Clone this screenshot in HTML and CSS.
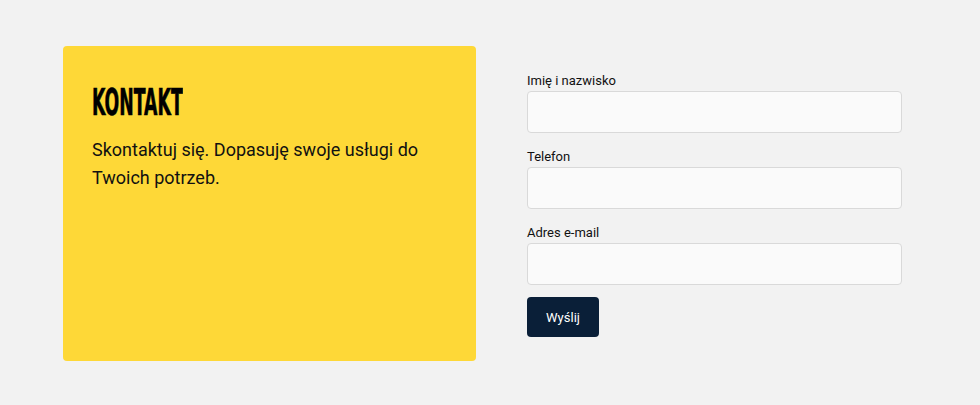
FILE: index.html
```html
<!DOCTYPE html>
<html lang="pl">
<head>
<meta charset="utf-8">
<title>Kontakt</title>
<link rel="stylesheet" href="styles.css">
</head>
<body>
<section class="contact">
  <div class="card">
    <h2 class="title"><span>KONTAKT</span></h2>
    <p class="lead">Skontaktuj się. Dopasuję swoje usługi do Twoich potrzeb.</p>
  </div>
  <form class="form">
    <label class="field">
      <span class="label">Imię i nazwisko</span>
      <input class="input" type="text">
    </label>
    <label class="field">
      <span class="label">Telefon</span>
      <input class="input" type="tel">
    </label>
    <label class="field">
      <span class="label">Adres e-mail</span>
      <input class="input" type="email">
    </label>
    <button class="btn" type="button">Wyślij</button>
  </form>
</section>
</body>
</html>
```
FILE: styles.css
```css
* { box-sizing: border-box; }
html, body { margin: 0; padding: 0; }
body {
  background: #f2f2f2;
  font-family: Roboto, "Liberation Sans", sans-serif;
  color: #111;
  width: 980px;
  height: 405px;
  overflow: hidden;
}
.contact {
  display: flex;
  align-items: flex-start;
  padding: 46px 0 0 63px;
  gap: 51px;
}
.card {
  width: 413px;
  height: 315px;
  background: #fed837;
  border-radius: 4px;
  padding: 40px 29px;
}
.title {
  margin: 0;
  height: 34px;
  line-height: 34px;
  font-family: "Liberation Sans Narrow", "DejaVu Sans Condensed", sans-serif;
  font-weight: 700;
  font-size: 37px;
  color: #000;
  white-space: nowrap;
}
.title span {
  display: inline-block;
  transform: scaleX(0.52);
  transform-origin: left center;
  -webkit-text-stroke: 0.6px #000;
}
.lead {
  margin: 16px 0 0;
  font-size: 18px;
  line-height: 28px;
  color: #111;
}
.form {
  width: 375px;
  padding-top: 25px;
  display: flex;
  flex-direction: column;
}
.field {
  display: flex;
  flex-direction: column;
  margin-bottom: 14px;
}
.label {
  font-size: 13px;
  line-height: 20px;
  color: #111;
}
.input {
  height: 42px;
  border: 1px solid #d9d9d9;
  border-radius: 4px;
  background: #fafafa;
  font: inherit;
}
.btn {
  align-self: flex-start;
  width: 72px;
  height: 40px;
  margin-top: -2px;
  border: none;
  border-radius: 4px;
  background: #0a1f38;
  color: #fff;
  font-family: Roboto, "Liberation Sans", sans-serif;
  font-weight: 400;
  font-size: 13px;
}
```
